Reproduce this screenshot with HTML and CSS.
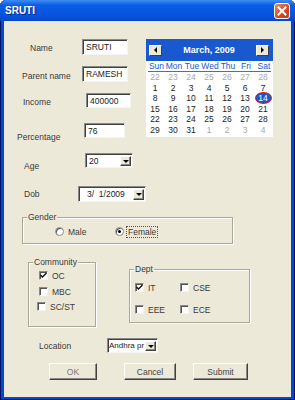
FILE: index.html
```html
<!DOCTYPE html>
<html lang="en">
<head>
    <meta charset="UTF-8">
    <title>SRUTI</title>
    <link rel="stylesheet" href="styles.css">
</head>
<body>
<div class="window">
    <div class="titlebar">
        <span class="title">SRUTI</span>
        <span class="close">
            <svg width="10" height="10" viewBox="0 0 10 10"><path d="M1.5 1.5 L8.5 8.5 M8.5 1.5 L1.5 8.5" stroke="#fff" stroke-width="2" stroke-linecap="square"/></svg>
        </span>
    </div>
    <div class="client">
        <div class="top">
            <div class="fields">
                <div class="field f-name"><label>Name</label><div class="textbox tb-name">SRUTI</div></div>
                <div class="field f-parent"><label>Parent name</label><div class="textbox tb-name">RAMESH</div></div>
                <div class="field f-income"><label>Income</label><div class="textbox tb-income">400000</div></div>
                <div class="field f-perc"><label>Percentage</label><div class="textbox tb-perc">76</div></div>
                <div class="field f-age"><label>Age</label><div class="combo cb-age"><span class="value">20</span><span class="drop"></span></div></div>
                <div class="field f-dob"><label>Dob</label><div class="combo cb-dob"><span class="value">3/&nbsp; 1/2009</span><span class="drop"></span></div></div>
            </div>
            <div class="calendar">
                <div class="cal-head">
                    <span class="cal-btn"><span class="tri-left"></span></span>
                    <span class="cal-title">March, 2009</span>
                    <span class="cal-btn"><span class="tri-right"></span></span>
                </div>
                <div class="cal-days">
                    <span>Sun</span><span>Mon</span><span>Tue</span><span>Wed</span><span>Thu</span><span>Fri</span><span>Sat</span>
                </div>
                <div class="cal-grid">
                    <span class="other">22</span><span class="other">23</span><span class="other">24</span><span class="other">25</span><span class="other">26</span><span class="other">27</span><span class="other">28</span>
                    <span>1</span><span>2</span><span>3</span><span>4</span><span>5</span><span>6</span><span>7</span>
                    <span>8</span><span>9</span><span>10</span><span>11</span><span>12</span><span>13</span><span><b class="sel">14</b></span>
                    <span>15</span><span>16</span><span>17</span><span>18</span><span>19</span><span>20</span><span>21</span>
                    <span>22</span><span>23</span><span>24</span><span>25</span><span>26</span><span>27</span><span>28</span>
                    <span>29</span><span>30</span><span>31</span><span class="other">1</span><span class="other">2</span><span class="other">3</span><span class="other">4</span>
                </div>
            </div>
        </div>

        <div class="group gender">
            <span class="legend">Gender</span>
            <span class="radio"><span class="dot"></span>Male</span>
            <span class="radio"><span class="dot on"></span><span class="focus">Female</span></span>
        </div>

        <div class="groups">
            <div class="group community">
                <span class="legend">Community</span>
                <span class="check"><span class="box on"><svg width="7" height="7" viewBox="0 0 7 7"><path d="M0.5 3 L2.5 5 L6.5 1" fill="none" stroke="#111" stroke-width="1.4"/></svg></span>OC</span>
                <span class="check"><span class="box"></span>MBC</span>
                <span class="check check-shift"><span class="box"></span>SC/ST</span>
            </div>
            <div class="group dept">
                <span class="legend">Dept</span>
                <span class="check"><span class="box on"><svg width="7" height="7" viewBox="0 0 7 7"><path d="M0.5 3 L2.5 5 L6.5 1" fill="none" stroke="#111" stroke-width="1.4"/></svg></span>IT</span>
                <span class="check"><span class="box"></span>CSE</span>
                <span class="check"><span class="box"></span>EEE</span>
                <span class="check"><span class="box"></span>ECE</span>
            </div>
        </div>

        <div class="location">
            <label>Location</label>
            <div class="combo cb-loc"><span class="value">Andhra pr</span><span class="drop"></span></div>
        </div>

        <div class="buttons">
            <span class="btn btn-ok">OK</span>
            <span class="btn btn-cancel">Cancel</span>
            <span class="btn btn-submit">Submit</span>
        </div>
    </div>
</div>
</body>
</html>
```

FILE: styles.css
```css
* {
    margin: 0;
    padding: 0;
    box-sizing: border-box;
}

body {
    width: 295px;
    height: 400px;
    overflow: hidden;
    font-family: "Liberation Sans", Arial, sans-serif;
    font-size: 8.5px;
    color: #3a3a3a;
}

.window {
    width: 295px;
    height: 400px;
    display: flex;
    flex-direction: column;
    background: #0b44cf;
    border-radius: 6px 6px 0 0;
    box-shadow: inset 1px 0 0 #001466, inset -1px 0 0 #001466, inset 0 -1px 0 #001466;
    overflow: hidden;
}

/* title bar */
.titlebar {
    height: 21px;
    flex: none;
    display: flex;
    align-items: center;
    justify-content: space-between;
    padding: 0 5px 0 5px;
    background: linear-gradient(#3d8df5, #0a5ce6 25%, #0653dd 75%, #0846c4);
}

.title {
    color: #fff;
    font-weight: bold;
    font-size: 10px;
    text-shadow: 1px 1px 0 #0a2a80;
}

.close {
    width: 16px;
    height: 16px;
    display: flex;
    align-items: center;
    justify-content: center;
    background: linear-gradient(135deg, #e9876a, #d24a22 60%, #b8361a);
    border: 1px solid #fff;
    border-radius: 3px;
}

/* client area */
.client {
    flex: 1;
    margin: 0 4px 3px 4px;
    background: #ECE9D8;
}

.top {
    display: flex;
}

.fields {
    width: 142px;
    padding-top: 18px;
}

.field {
    display: flex;
    align-items: flex-start;
}

.field label,
.location label {
    flex: none;
    line-height: 10px;
}

.f-name { height: 27px; }
.f-name label { margin: 4px 0 0 26px; width: 52px; }
.f-parent { height: 27px; }
.f-parent label { margin: 5px 0 0 18px; width: 60px; }
.f-income { height: 30px; }
.f-income label { margin: 4px 0 0 19px; width: 63px; }
.f-perc { height: 30px; }
.f-perc label { margin: 9px 0 0 13px; width: 67px; }
.f-age { height: 33px; }
.f-age label { margin: 8px 0 0 20px; width: 61px; }
.f-dob { height: 16px; }
.f-dob label { margin: 3px 0 0 20px; width: 54px; }

.textbox,
.combo {
    background: #fff;
    border: 1px solid;
    border-color: #8a8a8a #f4f4f4 #f4f4f4 #8a8a8a;
    box-shadow: inset 1px 1px 0 #404040;
    color: #222;
    line-height: 10px;
}

.textbox {
    padding: 2px 0 0 3px;
}

.tb-name { width: 46px; height: 16px; }
.tb-income { width: 45px; height: 15px; }
.tb-perc { width: 41px; height: 15px; }

.combo {
    display: flex;
    padding: 2px 1px 1px 3px;
}

.combo .value {
    flex: 1;
    overflow: hidden;
    white-space: nowrap;
    line-height: 10px;
}

.combo .drop {
    flex: none;
    width: 11px;
    background: #ECE9D8;
    border: 1px solid;
    border-color: #fff #404040 #404040 #fff;
    box-shadow: inset -1px -1px 0 #888;
    display: flex;
    align-items: center;
    justify-content: center;
}

.combo .drop::after {
    content: "";
    border-top: 3px solid #000;
    border-left: 3px solid transparent;
    border-right: 3px solid transparent;
}

.cb-age { width: 48px; height: 15px; }
.cb-dob { width: 69px; height: 16px; padding-left: 8px; }
.cb-loc { width: 51px; height: 15px; padding-left: 1px; }
.cb-loc .value { font-size: 8px; }

/* calendar */
.calendar {
    width: 127px;
    height: 98px;
    margin-top: 18px;
    background: #fff;
}

.cal-head {
    height: 22px;
    display: flex;
    align-items: center;
    justify-content: space-between;
    padding: 0 4px 0 3px;
    background: #1a58cf;
}

.cal-title {
    color: #fff;
    font-weight: bold;
    font-size: 9px;
}

.cal-btn {
    width: 13px;
    height: 11px;
    display: flex;
    align-items: center;
    justify-content: center;
    background: #ECE9D8;
    border: 1px solid;
    border-color: #fff #404040 #404040 #fff;
}

.tri-left {
    border-right: 3px solid #000;
    border-top: 3px solid transparent;
    border-bottom: 3px solid transparent;
}

.tri-right {
    border-left: 3px solid #000;
    border-top: 3px solid transparent;
    border-bottom: 3px solid transparent;
}

.cal-days,
.cal-grid {
    display: grid;
    grid-template-columns: repeat(7, 18px);
    text-align: center;
}

.cal-days {
    height: 11px;
    line-height: 10px;
    color: #1a58cf;
    border-bottom: 1px solid #5a6a9a;
    margin: 0 2px;
    grid-template-columns: 17px repeat(6, 18px);
}

.cal-grid {
    grid-auto-rows: 10.6px;
    line-height: 10.6px;
    color: #222;
}

.cal-grid .other {
    color: #a8a8a8;
}

.sel {
    display: inline-block;
    width: 15px;
    height: 10px;
    line-height: 10px;
    border-radius: 50%;
    background: #1a58cf;
    color: #fff;
    font-weight: normal;
    box-shadow: 0 0 0 1px #d81818;
}

/* group boxes */
.group {
    position: relative;
    border: 1px solid #aca899;
    box-shadow: inset 1px 1px 0 #fff, 1px 1px 0 #fff;
}

.legend {
    position: absolute;
    top: -6px;
    left: 4px;
    padding: 0 1px;
    background: #ECE9D8;
    line-height: 10px;
}

.gender {
    margin: 15px 0 0 18px;
    width: 211px;
    height: 27px;
    display: flex;
    padding: 9px 0 0 32px;
}

.radio {
    width: 60px;
    display: flex;
    align-items: center;
    height: 9px;
    line-height: 10px;
}

.dot {
    width: 9px;
    height: 9px;
    margin-right: 4px;
    border-radius: 50%;
    background: #fff;
    border: 1px solid #8a8a8a;
    box-shadow: inset 1px 1px 0 #555;
    display: flex;
    align-items: center;
    justify-content: center;
}

.dot.on::after {
    content: "";
    width: 3px;
    height: 3px;
    border-radius: 50%;
    background: #000;
}

.focus {
    outline: 1px dotted #555;
    padding: 0 1px;
    margin-left: -1px;
}

.groups {
    display: flex;
    align-items: flex-start;
    margin-top: 18px;
}

.community {
    margin-left: 24px;
    width: 68px;
    height: 65px;
    display: flex;
    flex-direction: column;
    padding: 8px 0 0 10px;
}

.dept {
    margin: 7px 0 0 33px;
    width: 121px;
    height: 54px;
    display: grid;
    grid-template-columns: 45px 45px;
    grid-auto-rows: 22px;
    padding: 13px 0 0 5px;
}

.check {
    display: flex;
    align-items: center;
    height: 9px;
    line-height: 10px;
}

.community .check {
    height: 15.5px;
    align-items: flex-start;
}

.check-shift {
    margin-left: -2px;
}

.box {
    width: 9px;
    height: 9px;
    margin-right: 4px;
    background: #fff;
    border: 1px solid;
    border-color: #8a8a8a #f4f4f4 #f4f4f4 #8a8a8a;
    box-shadow: inset 1px 1px 0 #555;
    display: flex;
    align-items: center;
    justify-content: center;
}

.location {
    display: flex;
    align-items: center;
    margin-top: 11px;
}

.location label {
    margin-left: 35px;
    width: 68px;
}

.buttons {
    display: flex;
    margin-top: 10px;
}

.btn {
    height: 17px;
    display: flex;
    align-items: center;
    justify-content: center;
    background: #ECE9D8;
    border: 1px solid;
    border-color: #fff #404040 #404040 #fff;
    box-shadow: inset -1px -1px 0 #8a8a8a;
    color: #444;
}

.btn-ok { margin-left: 45px; width: 48px; color: #777; }
.btn-cancel { margin-left: 27px; width: 52px; }
.btn-submit { margin-left: 17px; width: 55px; }
```
